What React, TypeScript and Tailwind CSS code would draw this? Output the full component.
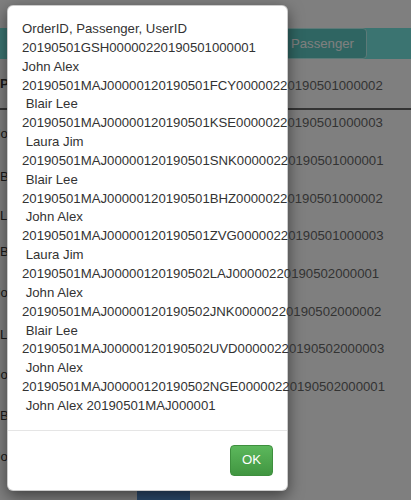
import React from "react";

const lines: string[] = [
  "OrderID, Passenger, UserID",
  "20190501GSH00000220190501000001",
  "John Alex",
  "20190501MAJ00000120190501FCY00000220190501000002",
  " Blair Lee",
  "20190501MAJ00000120190501KSE00000220190501000003",
  " Laura Jim",
  "20190501MAJ00000120190501SNK00000220190501000001",
  " Blair Lee",
  "20190501MAJ00000120190501BHZ00000220190501000002",
  " John Alex",
  "20190501MAJ00000120190501ZVG00000220190501000003",
  " Laura Jim",
  "20190501MAJ00000120190502LAJ00000220190502000001",
  " John Alex",
  "20190501MAJ00000120190502JNK00000220190502000002",
  " Blair Lee",
  "20190501MAJ00000120190502UVD00000220190502000003",
  " John Alex",
  "20190501MAJ00000120190502NGE00000220190502000001",
  " John Alex 20190501MAJ000001",
];

// rows of the table behind the modal (only the first letters peek out)
const rows: { name: string; h: string }[] = [
  { name: "John Alex", h: "h-[47px]" },
  { name: "Blair Lee", h: "h-[40px]" },
  { name: "Laura Jim", h: "h-[37px]" },
  { name: "Blair Lee", h: "h-[36px]" },
  { name: "John Alex", h: "h-[45px]" },
  { name: "Laura Jim", h: "h-[40px]" },
  { name: "John Alex", h: "h-[40px]" },
  { name: "Blair Lee", h: "h-[41px]" },
  { name: "John Alex", h: "h-[41px]" },
];

const App = () => {
  return (
    <div className="relative h-[500px] w-[411px] overflow-hidden bg-white font-['Liberation_Sans',Arial,sans-serif] text-[13.2px] text-[#333]">
      {/* page under the modal */}
      <div className="pt-[28px]">
        <div className="flex h-[31px] justify-end bg-[#76e8e2] pr-[44px]">
          <button className="rounded-r-[4px] border border-[#b8f4f0] bg-[#5ecbc4] px-[12px] text-[13.2px] text-white">
            Passenger
          </button>
        </div>
        <div className="flex h-[51px] items-center border-b-2 border-[#666] pl-[0px] font-bold">
          Passenger
        </div>
        {rows.map((row, index) => (
          <div
            key={index}
            className={`flex items-center ${row.h} ${
              row.name.startsWith("John") ? "-ml-[6px]" : "ml-0"
            }`}
          >
            {row.name}
          </div>
        ))}
        <div className="ml-[137px] h-[40px] w-[53px] rounded-[4px] bg-[#5895d8]" />
      </div>

      {/* backdrop */}
      <div className="absolute inset-0 bg-black/50" />

      {/* modal */}
      <div className="absolute left-[7px] top-[5px] w-[281px] rounded-[6px] border border-black/20 bg-white shadow-[0_5px_15px_rgba(0,0,0,0.5)]">
        <div className="px-[14px] py-[14px] leading-[18.85px]">
          {lines.map((line, index) => (
            <div key={index} className="whitespace-pre">
              {line}
            </div>
          ))}
        </div>
        <div className="flex justify-end border-t border-[#e5e5e5] px-[14px] pt-[14px] pb-[14px]">
          <button className="h-[31px] w-[43px] rounded-[4px] border border-[#3e8f3e] bg-gradient-to-b from-[#5cb85c] to-[#419641] text-[13.2px] text-white">
            OK
          </button>
        </div>
      </div>
    </div>
  );
};

export default App;
